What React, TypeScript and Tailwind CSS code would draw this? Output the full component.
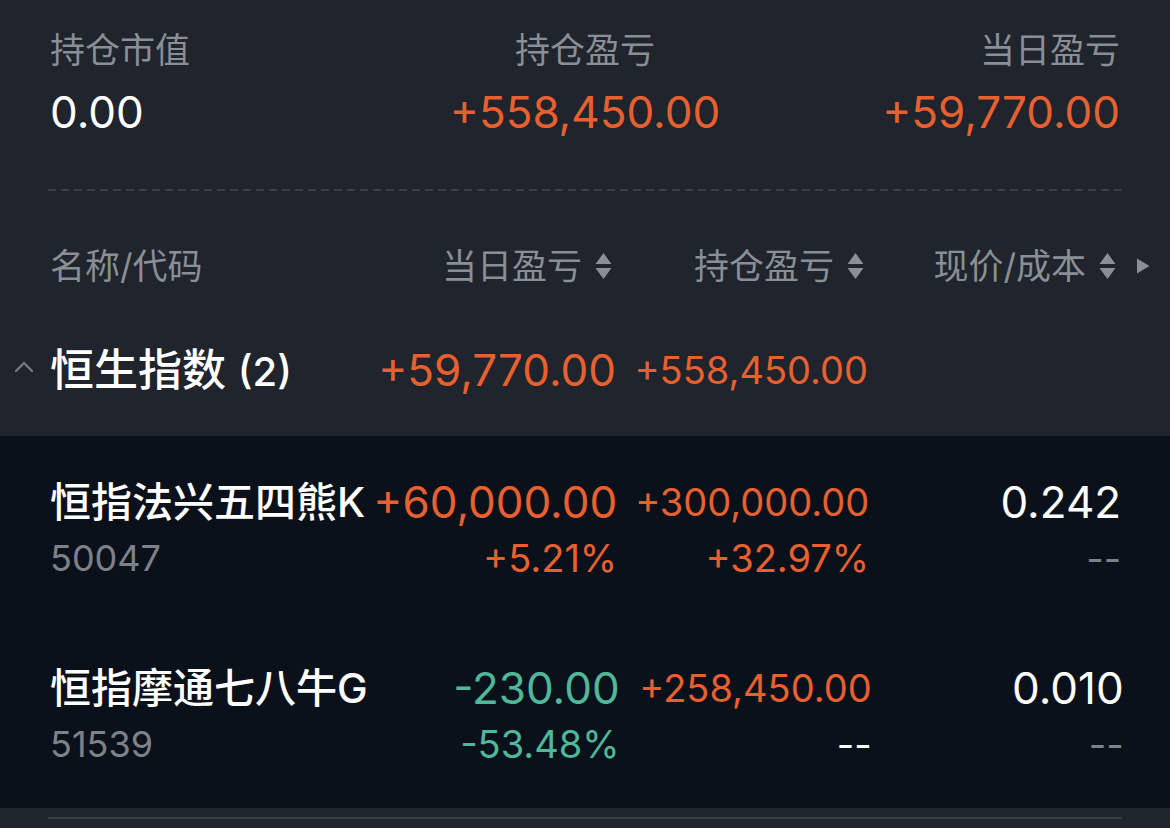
import { ChevronUp } from 'lucide-react';

type Tone = 'up' | 'down' | 'plain' | 'muted';
type Cell = { main: string; sub: string; tone: Tone; subTone?: Tone };

type Holding = {
  name: string;
  code: string;
  day: Cell;
  total: Cell;
  price: Cell;
};

const holdings: Holding[] = [
  {
    name: '恒指法兴五四熊K',
    code: '50047',
    day: { main: '+60,000.00', sub: '+5.21%', tone: 'up' },
    total: { main: '+300,000.00', sub: '+32.97%', tone: 'up' },
    price: { main: '0.242', sub: '--', tone: 'plain', subTone: 'muted' },
  },
  {
    name: '恒指摩通七八牛G',
    code: '51539',
    day: { main: '-230.00', sub: '-53.48%', tone: 'down' },
    total: { main: '+258,450.00', sub: '--', tone: 'up', subTone: 'plain' },
    price: { main: '0.010', sub: '--', tone: 'plain', subTone: 'muted' },
  },
];

const toneClass: Record<Tone, string> = {
  up: 'text-[#e8602f]',
  down: 'text-[#4fb79a]',
  plain: 'text-white',
  muted: 'text-[#7e8188]',
};

// 列宽只有 ~233px，长数字缩小字号放得下
const fitSize = (text: string) => (text.length > 10 ? 'text-[38px]' : 'text-[44px]');

function SortIcon() {
  return (
    <svg width="17" height="28" viewBox="0 0 17 28" className="shrink-0">
      <path d="M8.5 1 L16.5 12 L0.5 12 Z" fill="#8a8e95" />
      <path d="M0.5 16 L16.5 16 L8.5 27 Z" fill="#8a8e95" />
    </svg>
  );
}

function SortHeader({ label }: { label: string }) {
  return (
    <div className="flex items-center justify-end gap-[13px] pr-[4px]">
      <span>{label}</span>
      <SortIcon />
    </div>
  );
}

function ValueCell({ cell }: { cell: Cell }) {
  return (
    <div className="flex flex-col items-end pt-[41px]">
      <div className={`h-[50px] leading-[50px] ${fitSize(cell.main)} ${toneClass[cell.tone]}`}>{cell.main}</div>
      <div className={`mt-[11px] h-[40px] leading-[40px] text-[38px] ${toneClass[cell.subTone ?? cell.tone]}`}>
        {cell.sub}
      </div>
    </div>
  );
}

export default function App() {
  return (
    <div
      className="w-[1170px] h-[828px] overflow-hidden bg-[#0b111a] flex flex-col"
      style={{ fontFamily: 'Inter, "Noto Sans CJK SC", sans-serif' }}
    >
      {/* 汇总 + 表头 + 分组 */}
      <section className="bg-[#1f242d] px-[50px]">
        <div className="grid grid-cols-3 pt-[30px]">
          <div className="flex flex-col items-start">
            <span className="h-[40px] leading-[40px] text-[35px] text-[#8a8e95]">持仓市值</span>
            <span className="mt-[17px] h-[50px] leading-[50px] text-[44px] text-white">0.00</span>
          </div>
          <div className="flex flex-col items-center">
            <span className="h-[40px] leading-[40px] text-[35px] text-[#8a8e95]">持仓盈亏</span>
            <span className="mt-[17px] h-[50px] leading-[50px] text-[44px] text-[#e8602f]">+558,450.00</span>
          </div>
          <div className="flex flex-col items-end">
            <span className="h-[40px] leading-[40px] text-[35px] text-[#8a8e95]">当日盈亏</span>
            <span className="mt-[17px] h-[50px] leading-[50px] text-[44px] text-[#e8602f]">+59,770.00</span>
          </div>
        </div>

        <div className="mt-[52px] -mx-[2px] h-[2px] bg-[linear-gradient(to_right,#3b4048_0_8px,transparent_8px_13px)] bg-[length:13px_2px]" />

        <div className="relative mt-[45px] h-[60px] grid grid-cols-[1fr_252px_252px_252px] items-center text-[35px] text-[#8a8e95]">
          <span>名称/代码</span>
          <SortHeader label="当日盈亏" />
          <SortHeader label="持仓盈亏" />
          <SortHeader label="现价/成本" />
          <svg width="14" height="16" viewBox="0 0 14 16" className="absolute -right-[30px] top-[22px]">
            <path d="M1 0.5 L13.5 8 L1 15.5 Z" fill="#8a8e95" />
          </svg>
        </div>

        <div className="mt-[14px] h-[126px] grid grid-cols-[1fr_252px_252px_252px] items-center">
          <div className="flex items-center -ml-[42px] gap-[10px] pb-[6px]">
            <ChevronUp className="w-[32px] h-[32px] text-[#7a7e85] -mt-[6px]" strokeWidth={1.6} />
            <span className="text-[44px] text-white font-medium">
              恒生指数 <span className="text-[40px]">(2)</span>
            </span>
          </div>
          <span className={`text-right text-[#e8602f] pb-[6px] ${fitSize('+59,770.00')}`}>+59,770.00</span>
          <span className={`text-right text-[#e8602f] pb-[6px] ${fitSize('+558,450.00')}`}>+558,450.00</span>
          <span />
        </div>
      </section>

      {/* 持仓明细 */}
      <section className="px-[50px]">
        {holdings.map((h) => (
          <div key={h.code} className="h-[186px] grid grid-cols-[1fr_252px_252px_252px]">
            <div className="flex flex-col items-start pt-[41px]">
              <div className="h-[50px] leading-[50px] text-[41px] font-medium text-white whitespace-nowrap">{h.name}</div>
              <div className="mt-[11px] h-[40px] leading-[40px] text-[36px] text-[#7e8188]">{h.code}</div>
            </div>
            <ValueCell cell={h.day} />
            <ValueCell cell={h.total} />
            <ValueCell cell={h.price} />
          </div>
        ))}
      </section>

      <div className="flex-1 bg-[#1f242d] pt-[9px] px-[48px]">
        <div className="h-[2px] bg-[#3a3f47]" />
      </div>
    </div>
  );
}
